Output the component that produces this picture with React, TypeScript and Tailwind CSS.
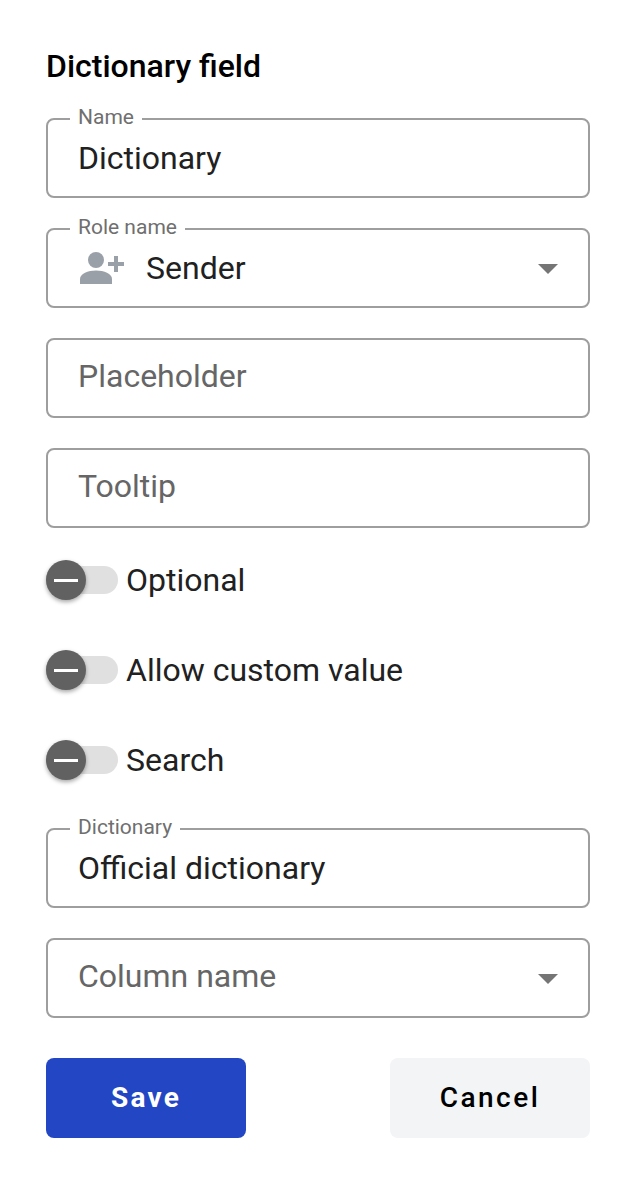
import React from 'react';

function Arrow() {
  return (
    <svg className="mt-0.5 mr-4 h-[10px] w-5 shrink-0" viewBox="0 0 20 10">
      <path d="M0 0h20L10 10z" fill="#757575" />
    </svg>
  );
}

function Field({ label, children }: { label?: string; children: React.ReactNode }) {
  return (
    <div className="relative flex h-20 items-center rounded-lg border-2 border-[#9e9e9e] pr-[14px] pl-[30px]">
      {label && (
        <span className="absolute -top-[15px] left-[22px] bg-white px-2 text-[21px] leading-6 text-[#6f6f6f]">
          {label}
        </span>
      )}
      {children}
    </div>
  );
}

function Value({ children }: { children: React.ReactNode }) {
  return <span className="flex-1 text-[32px] leading-9 text-[#212121]">{children}</span>;
}

function Hint({ children }: { children: React.ReactNode }) {
  return <span className="flex-1 pb-1 text-[32px] leading-9 text-[#666666]">{children}</span>;
}

function Toggle({ label }: { label: string }) {
  return (
    <div className="flex h-10 items-center">
      <span className="flex h-7 w-[72px] items-center rounded-full bg-[#e0e0e0]">
        <span className="flex size-10 items-center justify-center rounded-full bg-[#616161] shadow-[0_2px_4px_rgba(0,0,0,0.35)]">
          <span className="h-[3px] w-6 bg-white" />
        </span>
      </span>
      <span className="ml-2 text-[32px] leading-9 text-[#212121]">{label}</span>
    </div>
  );
}

export default function App() {
  return (
    <main className="h-[1180px] w-[632px] bg-white pt-[46px] pr-[42px] pl-[46px] font-['Roboto',sans-serif]">
      <h1 className="h-[72px] text-[32px] leading-10 font-medium text-black">Dictionary field</h1>
      <div className="flex flex-col gap-[30px]">
        <Field label="Name"><Value>Dictionary</Value></Field>
        <Field label="Role name">
          <svg className="mr-[22px] h-8 w-[46px] shrink-0" viewBox="0 0 46 32" fill="#9aa0a8">
            <circle cx="18" cy="8" r="8" />
            <path d="M2 32v-5c0-5.300 8-8.500 16-8.500s16 3.200 16 8.500v5zM36 4h4v6h6v4h-6v6h-4v-6h-6v-4h6z" />
          </svg>
          <Value>Sender</Value>
          <Arrow />
        </Field>
        <Field><Hint>Placeholder</Hint></Field>
        <Field><Hint>Tooltip</Hint></Field>
      </div>
      <div className="flex flex-col gap-[50px] pt-8 pb-12">
        <Toggle label="Optional" />
        <Toggle label="Allow custom value" />
        <Toggle label="Search" />
      </div>
      <div className="flex flex-col gap-[30px]">
        <Field label="Dictionary"><Value>Official dictionary</Value></Field>
        <Field><Hint>Column name</Hint><Arrow /></Field>
      </div>
      <div className="mt-10 flex justify-between">
        <button className="h-20 w-[200px] rounded-lg bg-[#2246c4] text-[28px] font-bold tracking-[2.24px] text-white">Save</button>
        <button className="h-20 w-[200px] rounded-lg bg-[#f3f4f6] text-[28px] font-medium tracking-[2.5px] text-black">Cancel</button>
      </div>
    </main>
  );
}
